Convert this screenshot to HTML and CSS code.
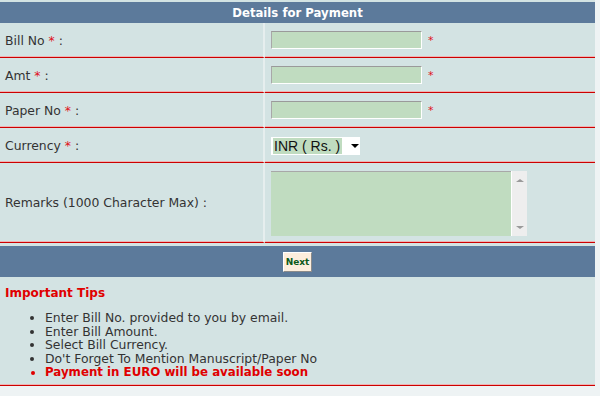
FILE: index.html
```html
<!DOCTYPE html>
<html lang="en">
<head>
    <meta charset="UTF-8">
    <meta name="viewport" content="width=device-width, initial-scale=1.0">
    <title>Details for Payment</title>
    <link rel="stylesheet" href="styles.css">
</head>
<body>

    <div class="payment">
        <table class="payment-form">
            <tr>
                <th colspan="2" class="head">Details for Payment</th>
            </tr>
            <tr>
                <td class="label">Bill No <span class="req">*</span> :</td>
                <td class="field"><input type="text" class="txt"> <span class="req">*</span></td>
            </tr>
            <tr>
                <td class="label">Amt <span class="req">*</span> :</td>
                <td class="field"><input type="text" class="txt"> <span class="req">*</span></td>
            </tr>
            <tr>
                <td class="label">Paper No <span class="req">*</span> :</td>
                <td class="field"><input type="text" class="txt"> <span class="req">*</span></td>
            </tr>
            <tr>
                <td class="label">Currency <span class="req">*</span> :</td>
                <td class="field">
                    <span class="select-box">
                        <select class="currency">
                            <option>INR ( Rs. )</option>
                        </select>
                        <span class="arrow"></span>
                    </span>
                </td>
            </tr>
            <tr class="remarks-row">
                <td class="label">Remarks (1000 Character Max) :</td>
                <td class="field">
                    <span class="memo">
                        <textarea class="remarks"></textarea>
                        <span class="scroll">
                            <span class="up"></span>
                            <span class="down"></span>
                        </span>
                    </span>
                </td>
            </tr>
        </table>

        <div class="actions">
            <button type="button" class="next">Next</button>
        </div>

        <div class="tips">
            <h3>Important Tips</h3>
            <ul>
                <li>Enter Bill No. provided to you by email.</li>
                <li>Enter Bill Amount.</li>
                <li>Select Bill Currency.</li>
                <li>Do't Forget To Mention Manuscript/Paper No</li>
                <li class="notice">Payment in EURO will be available soon</li>
            </ul>
        </div>
    </div>

</body>
</html>
```

FILE: styles.css
```css
body {
    margin: 0;
    background-color: #eef3f4;
    font-family: "DejaVu Sans", Verdana, sans-serif;
    font-size: 12.4px;
    color: #333;
}

.payment {
    width: 595px;
    padding-top: 2px;
    background-color: #d3e3e3;
}

.payment-form {
    width: 100%;
    border-collapse: separate;
    border-spacing: 0;
}

.head {
    height: 21px;
    padding: 0;
    background-color: #5c7a9b;
    color: #fff;
    font-size: 11.7px;
    font-weight: bold;
    text-align: center;
}

.label,
.field {
    height: 34px;
    padding: 0;
    border-bottom: 1px solid #cc0000;
    box-shadow: inset 0 -1px 0 #eeb4b4;
    vertical-align: middle;
}

.label {
    width: 258px;
    padding-left: 5px;
    border-right: 2px solid #e6eeee;
}

.field {
    padding-left: 6px;
}

.remarks-row .label,
.remarks-row .field {
    height: 79px;
}

.req {
    color: #e0101a;
}

.txt {
    width: 149px;
    height: 16px;
    margin: 0;
    padding: 0;
    border: 1px solid;
    border-color: #9a9a9a #fff #fff #a8a8a8;
    background-color: #c0dcc0;
    vertical-align: middle;
}

.field .req {
    margin-left: 2px;
    font-size: 11px;
}

.select-box {
    display: inline-flex;
    align-items: center;
    width: 89px;
    height: 18px;
    margin-top: 2px;
    background-color: #fff;
    vertical-align: middle;
}

.currency {
    appearance: none;
    width: 69px;
    height: 16px;
    margin-left: 2px;
    padding: 0 0 0 1px;
    border: 0;
    background-color: #c0dcc0;
    font-family: "Liberation Sans", Arial, sans-serif;
    font-size: 14px;
    color: #111;
}

.arrow {
    margin-left: 9px;
    border-top: 4px solid #000;
    border-left: 4px solid transparent;
    border-right: 4px solid transparent;
}

.memo {
    display: inline-flex;
    height: 65px;
    margin-top: 2px;
    vertical-align: middle;
}

.remarks {
    width: 240px;
    height: 65px;
    box-sizing: border-box;
    margin: 0;
    border: 0;
    border-top: 1px solid #a8a8a8;
    background-color: #c0dcc0;
    resize: none;
}

.scroll {
    display: flex;
    flex-direction: column;
    justify-content: space-between;
    align-items: center;
    width: 16px;
    padding: 8px 0 7px;
    box-sizing: border-box;
    border-left: 1px solid #fff;
    background-color: #eeeeee;
}

.up,
.down {
    border-left: 4px solid transparent;
    border-right: 4px solid transparent;
}

.up {
    border-bottom: 3px solid #9a9a9a;
}

.down {
    border-top: 3px solid #9a9a9a;
}

.actions {
    margin-top: 3px;
    height: 31px;
    display: flex;
    justify-content: center;
    align-items: center;
    background-color: #5c7a9b;
}

.next {
    width: 29px;
    height: 20px;
    padding: 0;
    border: 1px solid;
    border-color: #fff #8a8a8a #8a8a8a #fff;
    background-color: #fdeedd;
    font-family: "DejaVu Sans", Verdana, sans-serif;
    font-size: 9px;
    font-weight: bold;
    color: #0d5a1a;
    cursor: pointer;
}

.tips {
    padding: 9px 0 5px;
    border-bottom: 1px solid #cc0000;
    box-shadow: inset 0 -1px 0 #eeb4b4;
}

.tips h3 {
    margin: 0 0 11px 5px;
    font-size: 12px;
    color: #e00000;
}

.tips ul {
    margin: 0;
    padding-left: 45px;
    line-height: 13.7px;
}

.tips .notice {
    color: #e00000;
    font-size: 11.8px;
    font-weight: bold;
}
```
